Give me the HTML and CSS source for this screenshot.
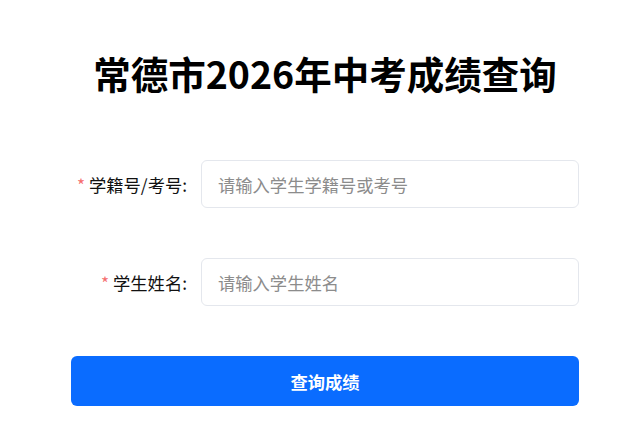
FILE: index.html
```html
<!DOCTYPE html>
<html lang="zh-CN">
	<head>
		<title>常德市2026年中考成绩查询</title>
		<meta charset="utf-8"/>
		<link rel="stylesheet" href="styles.css">
	</head>
	<body>
		<div class="page">
			<h1 class="title">常德市2026年中考成绩查询</h1>

			<form class="queryForm" onsubmit="return false;">
				<div class="formRow">
					<label class="formLabel" for="studentNo"><span class="required">*</span> 学籍号/考号:</label>
					<input class="formInput" id="studentNo" type="text" placeholder="请输入学生学籍号或考号">
				</div>

				<div class="formRow">
					<label class="formLabel" for="studentName"><span class="required">*</span> 学生姓名:</label>
					<input class="formInput" id="studentName" type="text" placeholder="请输入学生姓名">
				</div>

				<button class="submitBtn" type="submit">查询成绩</button>
			</form>
		</div>
	</body>
</html>
```

FILE: styles.css
```css
body, html {
	margin: 0;
	background: #fff;
	font-family: "Noto Sans CJK SC", "Noto Sans", sans-serif;
}

.page {
	padding: 47px 58px 0 71px;
}

.title {
	margin: 0;
	font-size: 37.5px;
	line-height: 52px;
	font-weight: bold;
	color: #000;
	text-align: center;
}

.queryForm {
	margin-top: 61px;
}

.formRow {
	display: flex;
	align-items: center;
	height: 48px;
	margin-bottom: 50px;
}

.formLabel {
	width: 130px;
	flex-shrink: 0;
	box-sizing: border-box;
	padding-right: 14px;
	text-align: right;
	font-size: 17.3px;
	color: #111;
}

.required {
	color: #f56c6c;
}

.formInput {
	flex: 1;
	height: 48px;
	box-sizing: border-box;
	border: 1px solid #e4e7ed;
	border-radius: 6px;
	padding: 0 16px;
	font-family: inherit;
	font-size: 17.3px;
	color: #333;
	outline: none;
}

.formInput::placeholder {
	color: #8c8c8c;
}

.submitBtn {
	display: block;
	width: 100%;
	height: 50px;
	border: none;
	border-radius: 6px;
	background-color: #0a6cff;
	color: #fff;
	font-family: inherit;
	font-size: 17.3px;
	font-weight: bold;
	cursor: pointer;
}
```
